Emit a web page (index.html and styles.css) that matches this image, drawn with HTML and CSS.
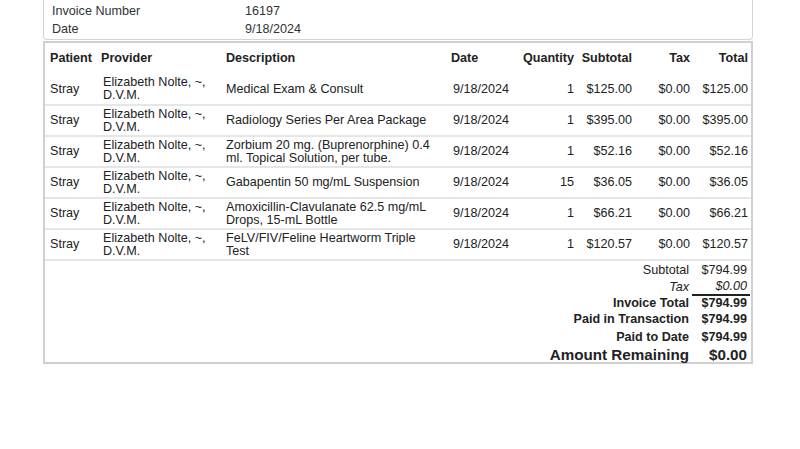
FILE: index.html
```html
<!DOCTYPE html>
<html lang="en">
<head>
    <meta charset="UTF-8">
    <meta name="viewport" content="width=device-width, initial-scale=1.0">
    <title>Invoice 16197</title>
    <link rel="stylesheet" href="styles.css">
</head>
<body>
    <div class="invoice">
        <div class="info-box">
            <div class="info-row"><span class="info-label">Invoice Number</span><span>16197</span></div>
            <div class="info-row"><span class="info-label">Date</span><span>9/18/2024</span></div>
        </div>

        <div class="items-box">
            <table class="items">
                <thead>
                    <tr>
                        <th class="col-patient">Patient</th>
                        <th class="col-provider">Provider</th>
                        <th class="col-desc">Description</th>
                        <th class="col-date">Date</th>
                        <th class="col-qty num">Quantity</th>
                        <th class="col-sub num">Subtotal</th>
                        <th class="col-tax num">Tax</th>
                        <th class="col-total num">Total</th>
                    </tr>
                </thead>
                <tbody>
                    <tr>
                        <td>Stray</td>
                        <td>Elizabeth Nolte, ~,<br>D.V.M.</td>
                        <td>Medical Exam &amp; Consult</td>
                        <td>9/18/2024</td>
                        <td class="num">1</td>
                        <td class="num">$125.00</td>
                        <td class="num">$0.00</td>
                        <td class="num">$125.00</td>
                    </tr>
                    <tr>
                        <td>Stray</td>
                        <td>Elizabeth Nolte, ~,<br>D.V.M.</td>
                        <td>Radiology Series Per Area Package</td>
                        <td>9/18/2024</td>
                        <td class="num">1</td>
                        <td class="num">$395.00</td>
                        <td class="num">$0.00</td>
                        <td class="num">$395.00</td>
                    </tr>
                    <tr>
                        <td>Stray</td>
                        <td>Elizabeth Nolte, ~,<br>D.V.M.</td>
                        <td>Zorbium 20 mg. (Buprenorphine) 0.4<br>ml. Topical Solution, per tube.</td>
                        <td>9/18/2024</td>
                        <td class="num">1</td>
                        <td class="num">$52.16</td>
                        <td class="num">$0.00</td>
                        <td class="num">$52.16</td>
                    </tr>
                    <tr>
                        <td>Stray</td>
                        <td>Elizabeth Nolte, ~,<br>D.V.M.</td>
                        <td>Gabapentin 50 mg/mL Suspension</td>
                        <td>9/18/2024</td>
                        <td class="num">15</td>
                        <td class="num">$36.05</td>
                        <td class="num">$0.00</td>
                        <td class="num">$36.05</td>
                    </tr>
                    <tr>
                        <td>Stray</td>
                        <td>Elizabeth Nolte, ~,<br>D.V.M.</td>
                        <td>Amoxicillin-Clavulanate 62.5 mg/mL<br>Drops, 15-mL Bottle</td>
                        <td>9/18/2024</td>
                        <td class="num">1</td>
                        <td class="num">$66.21</td>
                        <td class="num">$0.00</td>
                        <td class="num">$66.21</td>
                    </tr>
                    <tr>
                        <td>Stray</td>
                        <td>Elizabeth Nolte, ~,<br>D.V.M.</td>
                        <td>FeLV/FIV/Feline Heartworm Triple<br>Test</td>
                        <td>9/18/2024</td>
                        <td class="num">1</td>
                        <td class="num">$120.57</td>
                        <td class="num">$0.00</td>
                        <td class="num">$120.57</td>
                    </tr>
                </tbody>
            </table>

            <table class="totals">
                <tr class="t-sub"><td>Subtotal</td><td>$794.99</td></tr>
                <tr class="t-tax"><td>Tax</td><td>$0.00</td></tr>
                <tr class="t-bold t-invoice"><td>Invoice Total</td><td>$794.99</td></tr>
                <tr class="t-bold t-paid"><td>Paid in Transaction</td><td>$794.99</td></tr>
                <tr class="t-bold t-paid"><td>Paid to Date</td><td>$794.99</td></tr>
                <tr class="t-bold t-remaining"><td>Amount Remaining</td><td>$0.00</td></tr>
            </table>
        </div>
    </div>
</body>
</html>
```

FILE: styles.css
```css
body {
    font-family: "Liberation Sans", Arial, sans-serif;
    font-size: 12.6px;
    color: #222;
    background-color: #fff;
    margin: 0;
    padding: 0;
}
.invoice {
    width: 710px;
    margin-left: 43px;
}
.info-box {
    border: 1px solid #d4d4d4;
    border-top: none;
    border-radius: 0 0 4px 4px;
    padding: 2px 8px 1px 8px;
    height: 36px;
    color: #333;
}
.info-row {
    display: flex;
    line-height: 18px;
}
.info-label {
    width: 193px;
}
.items-box {
    margin-top: 1px;
    border: 2px solid #d0d0d0;
    height: 319px;
}
.items {
    width: 706px;
    border-collapse: collapse;
    table-layout: fixed;
}
.items th, .items td {
    box-sizing: border-box;
    padding: 0 3px;
    white-space: nowrap;
}
.items th {
    font-weight: bold;
    text-align: left;
    height: 30px;
}
.items td {
    height: 31px;
    line-height: 13px;
    border-bottom: 2px solid #e6e6e6;
    vertical-align: middle;
}
.items tbody tr:first-child td {
    height: 32px;
    padding-top: 1px;
}
.items .num {
    text-align: right;
}
.col-patient { width: 53px; }
.col-provider { width: 125px; }
.col-desc { width: 225px; }
.col-date { width: 68px; }
.col-qty { width: 61px; }
.col-sub { width: 58px; }
.col-tax { width: 58px; }
.col-total { width: 58px; }
.items th.col-patient, .items td:first-child {
    padding-left: 5px;
}
.items td:nth-child(2) {
    padding-left: 5px;
}
.items td:nth-child(4) {
    padding-left: 5px;
}
.totals {
    margin-left: auto;
    margin-right: 1px;
    margin-top: 1px;
    border-collapse: collapse;
}
.totals td {
    text-align: right;
    padding: 0 3px;
    line-height: 16px;
}
.totals td:last-child {
    width: 52px;
}
.t-tax td {
    font-style: italic;
}
.t-tax td:last-child {
    border-bottom: 2px solid #222;
}
.t-bold td {
    font-weight: bold;
}
.t-invoice td {
    line-height: 15px;
}
.t-paid td {
    line-height: 17.5px;
}
.t-remaining td {
    font-size: 15.2px;
    line-height: 18px;
}
```
